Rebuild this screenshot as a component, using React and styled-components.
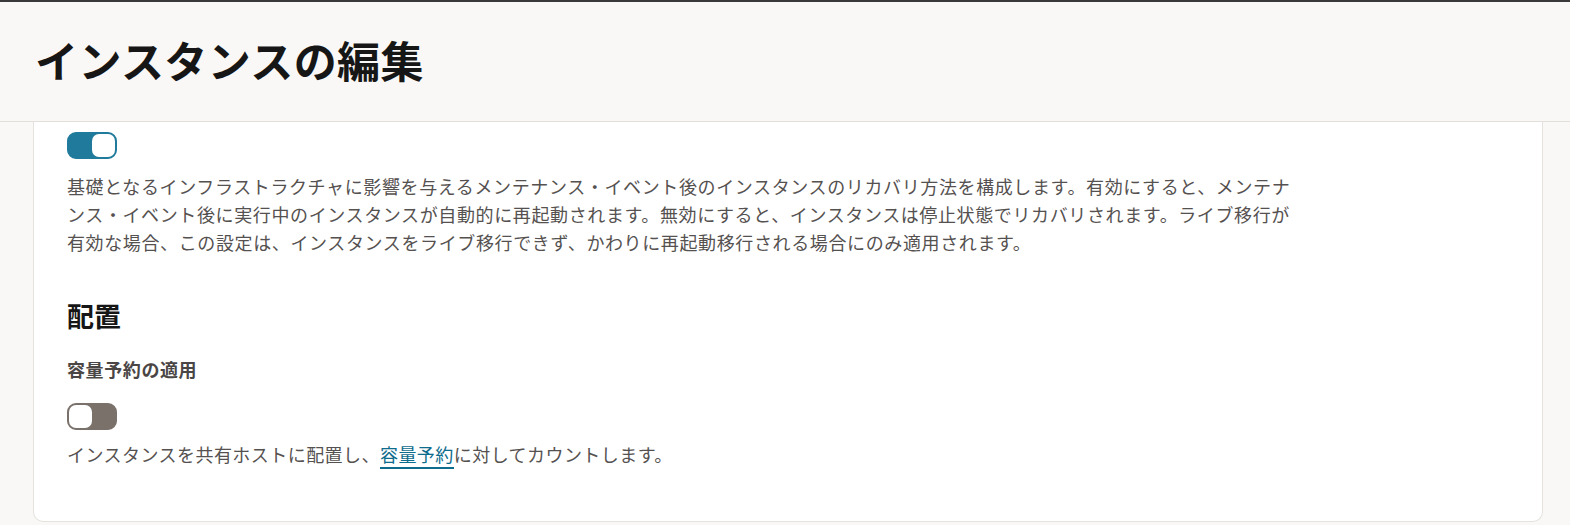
import React from 'react';
import styled, { createGlobalStyle } from 'styled-components';

const GlobalStyle = createGlobalStyle`
  html, body {
    margin: 0;
    padding: 0;
    background: #f9f8f6;
  }
  body {
    font-family: "Noto Sans CJK JP", "Noto Sans", sans-serif;
    overflow: hidden;
  }
`

const Page = styled.div`
  height: 525px;
  display: flex;
  flex-direction: column;
  border-top: 2px solid #3a3a3a;
  box-sizing: border-box;
  background: #f9f8f6;
`

const Header = styled.header`
  height: 119px;
  flex-shrink: 0;
  display: flex;
  align-items: center;
  padding-left: 35px;
  border-bottom: 1px solid #e2dfdb;
  background: #f9f8f6;

  h1 {
    margin: 0;
    font-size: 43px;
    font-weight: 700;
    color: #161616;
    letter-spacing: 0.4px;
    line-height: 1;
    transform: translateY(-2px);
  }
`

const Body = styled.div`
  flex: 1;
  display: flex;
  padding: 0 27px 3px 33px;
  min-height: 0;
`

const Card = styled.section`
  flex: 1;
  background: #fff;
  border: 1px solid #e6e3df;
  border-top: none;
  border-radius: 0 0 10px 10px;
  padding: 10px 33px 0 33px;
  display: flex;
  flex-direction: column;
`

const Toggle = styled.span`
  display: block;
  width: 50px;
  height: 27px;
  box-sizing: border-box;
  border-radius: 9px;
  border: 2px solid ${p => (p.$on ? '#1f7a9c' : '#7a716b')};
  background: ${p => (p.$on ? '#1f7a9c' : '#7a716b')};
  display: flex;
  justify-content: ${p => (p.$on ? 'flex-end' : 'flex-start')};

  &::after {
    content: '';
    width: 23px;
    height: 23px;
    box-sizing: border-box;
    border-radius: 7px;
    background: #fff;
  }
`

const Description = styled.p`
  margin: ${p => p.$top || 13}px 0 0;
  max-width: 1236px;
  font-size: 18px;
  letter-spacing: ${p => p.$tight ? '0.45px' : '0.62px'};
  line-height: 28px;
  color: #555150;

  a {
    color: #0e6c8c;
    text-decoration: none;
    border-bottom: 2px solid #0e6c8c;
  }
`

const SectionTitle = styled.h2`
  margin: 42px 0 0;
  font-size: 27px;
  font-weight: 700;
  line-height: 36px;
  color: #161616;
`

const FieldLabel = styled.div`
  margin-top: 21px;
  font-size: 18px;
  letter-spacing: 0.6px;
  font-weight: 700;
  line-height: 28px;
  color: #4a4645;
`

const FieldToggle = styled.div`
  margin-top: 20px;
`

export default function App() {
  return (
    <>
      <GlobalStyle />
      <Page>
        <Header>
          <h1>インスタンスの編集</h1>
        </Header>
        <Body>
          <Card>
            <Toggle $on />
            <Description>
              基礎となるインフラストラクチャに影響を与えるメンテナンス・イベント後のインスタンスのリカバリ方法を構成します。有効にすると、メンテナンス・イベント後に実行中のインスタンスが自動的に再起動されます。無効にすると、インスタンスは停止状態でリカバリされます。ライブ移行が有効な場合、この設定は、インスタンスをライブ移行できず、かわりに再起動移行される場合にのみ適用されます。
            </Description>
            <SectionTitle>配置</SectionTitle>
            <FieldLabel>容量予約の適用</FieldLabel>
            <FieldToggle>
              <Toggle />
            </FieldToggle>
            <Description $top={10} $tight>
              インスタンスを共有ホストに配置し、<a href="#">容量予約</a>に対してカウントします。
            </Description>
          </Card>
        </Body>
      </Page>
    </>
  );
}
